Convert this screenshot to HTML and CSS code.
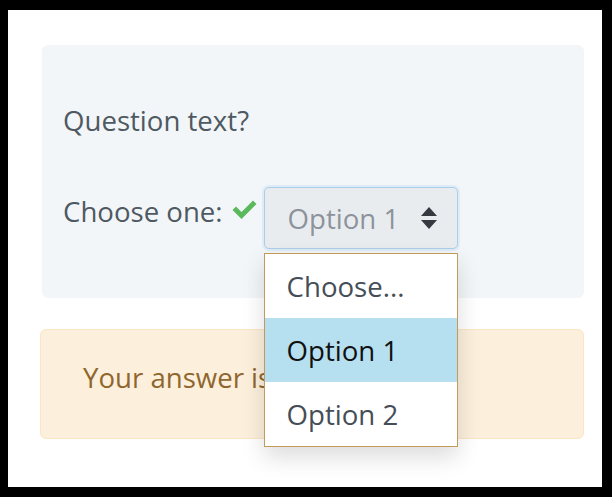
FILE: index.html
```html
<!DOCTYPE html>
<html>
<head>
<meta charset="utf-8">
<link rel="stylesheet" href="styles.css">
</head>
<body>
<div class="page">
  <div class="que">
    <p class="qtext">Question text?</p>
    <div class="answer-row">
      <span class="label">Choose one:</span>
      <svg class="check" width="25" height="19" viewBox="0 0 25 19"><path d="M0.5 10 L4 6.5 L9.5 12 L21 0.5 L24.5 4 L9.5 19 Z" fill="#5cb85c"/></svg>
      <div class="select-wrap">
        <div class="select">
          <span class="sel-text">Option 1</span>
          <svg class="arrows" width="16" height="22" viewBox="0 0 16 22"><path d="M8 0 L16 9 L0 9 Z M0 13 L16 13 L8 22 Z" fill="#343a40"/></svg>
        </div>
        <ul class="dropdown">
          <li>Choose...</li>
          <li class="active">Option 1</li>
          <li>Option 2</li>
        </ul>
      </div>
    </div>
  </div>
  <div class="feedback">Your answer is correct.</div>
</div>
</body>
</html>
```
FILE: styles.css
```css
html { background: #000; }
body {
  margin: 10px 10px 10px 8px;
  background: #fff;
  height: 477px;
  font-family: "Open Sans", "Liberation Sans", sans-serif;
}
.page {
  padding: 35px 18px 0 32px;
}
.que {
  margin-left: 2px;
  background: #f2f6f9;
  border-radius: 6px;
  height: 253px;
  padding: 0 21px;
  box-sizing: border-box;
  padding-top: 56px;
}
.qtext {
  margin: 0;
  font-size: 27.6px;
  line-height: 38px;
  color: #4f5962;
}
.answer-row {
  display: flex;
  align-items: center;
  margin-top: 48px;
  color: #4f5962;
  font-size: 27.6px;
}
.label { margin-bottom: 14px; }
.check { margin-left: 9px; margin-right: 7px; margin-bottom: 18px; }
.select-wrap { position: relative; }
.select {
  width: 194px;
  height: 62px;
  box-sizing: border-box;
  background: #e9ecef;
  border: 1px solid #aacfe9;
  border-radius: 5px;
  box-shadow: 0 0 0 2px rgba(210, 230, 245, .6);
  display: flex;
  align-items: center;
  padding: 0 20px 0 23px;
  justify-content: space-between;
}
.sel-text { color: #8c939b; font-size: 27.6px; }
.dropdown {
  position: absolute;
  left: 0;
  top: 66px;
  width: 194px;
  box-sizing: border-box;
  margin: 0;
  padding: 0;
  list-style: none;
  background: #fff;
  border: 1px solid #c39a5e;
  box-shadow: 0 10px 22px rgba(0,0,0,.14);
  z-index: 5;
}
.dropdown li {
  height: 64px;
  line-height: 64px;
  padding-left: 22px;
  font-size: 27.6px;
  color: #454e57;
}
.dropdown li.active { background: #b6dff0; color: #111; }
.feedback {
  margin-top: 31px;
  height: 110px;
  box-sizing: border-box;
  background: #fcefdc;
  border: 1px solid #fbe5c5;
  border-radius: 6px;
  color: #8e662e;
  font-size: 27.6px;
  display: flex;
  align-items: center;
  padding-left: 42px;
  padding-bottom: 14px;
}
```
